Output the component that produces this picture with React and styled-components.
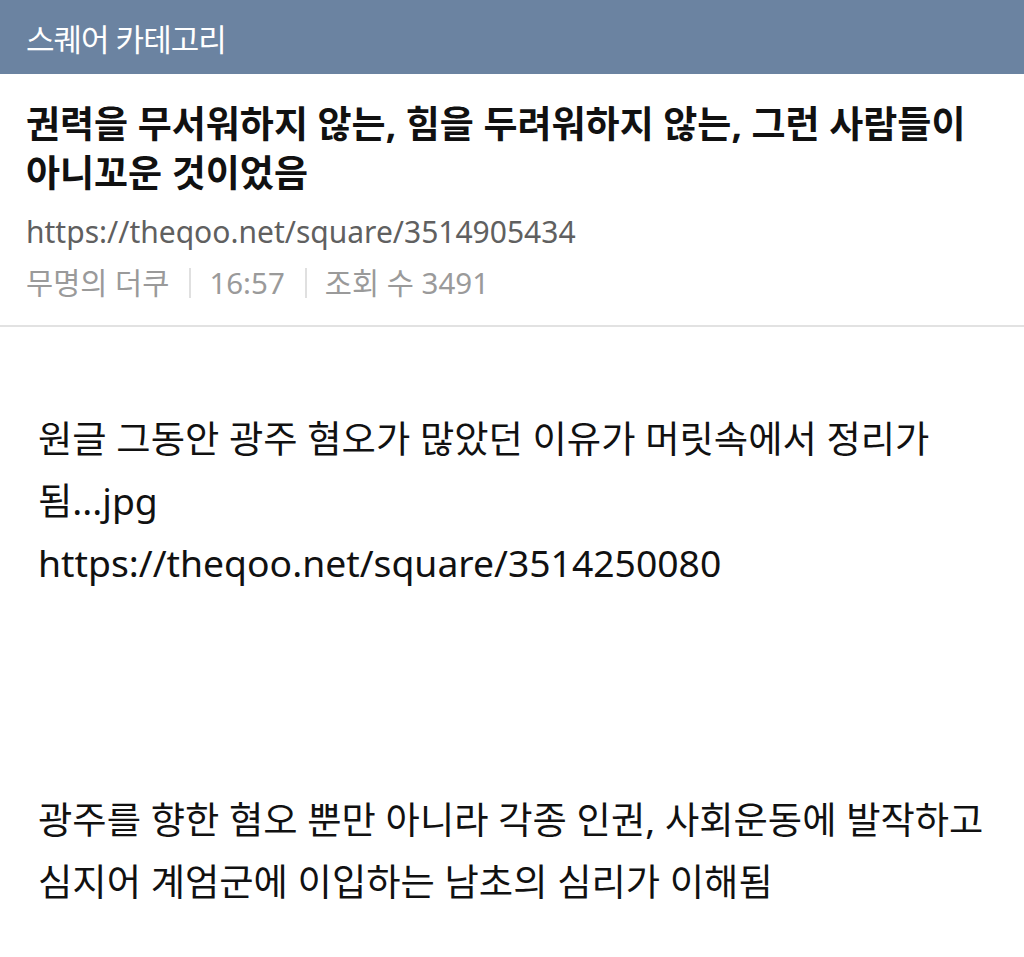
import React from "react";
import styled, { createGlobalStyle } from "styled-components";

const GlobalStyle = createGlobalStyle`
  html, body {
    margin: 0;
    padding: 0;
    background: #fff;
  }
  body {
    font-family: "Noto Sans", "Noto Sans CJK KR", sans-serif;
  }
`;

const Page = styled.div`
  width: 1024px;
  min-height: 957px;
  background: #fff;
`;

const TopBar = styled.header`
  height: 74px;
  background: #6b83a1;
  display: flex;
  align-items: center;
  padding: 0 26px;
  box-sizing: border-box;
  color: #fff;
  font-size: 31px;
  letter-spacing: -1px;
`;

const Head = styled.section`
  padding: 25px 26px 22px;
  border-bottom: 2px solid #e2e2e2;
`;

const Title = styled.h1`
  margin: 0;
  font-size: 37px;
  font-weight: 700;
  line-height: 49px;
  color: #111;
`;

const Link = styled.div`
  margin-top: 15px;
  font-size: 30px;
  line-height: 40px;
  color: #606060;
`;

const Meta = styled.div`
  margin-top: 11px;
  display: flex;
  align-items: center;
  font-size: 29.5px;
  line-height: 40px;
  color: #9a9a9a;
`;

const Sep = styled.span`
  width: 2px;
  height: 30px;
  background: #e0e0e0;
  margin: 0 18px 0 20px;
`;

const Body = styled.article`
  padding: 81px 28px 40px 38px;
  font-size: 37.3px;
  line-height: 62px;
  color: #111;
`;

const Para = styled.p`
  margin: 0;
  & + & {
    margin-top: ${p => p.gap || 0}px;
  }
`;

export default function App() {
  return (
    <Page>
      <GlobalStyle />
      <TopBar>스퀘어 카테고리</TopBar>
      <Head>
        <Title>권력을 무서워하지 않는, 힘을 두려워하지 않는, 그런 사람들이 아니꼬운 것이었음</Title>
        <Link>https://theqoo.net/square/3514905434</Link>
        <Meta>
          <span>무명의 더쿠</span>
          <Sep />
          <span>16:57</span>
          <Sep />
          <span>조회 수 3491</span>
        </Meta>
      </Head>
      <Body>
        <Para>
          원글 그동안 광주 혐오가 많았던 이유가 머릿속에서 정리가 됨...jpg
          <br />
          https://theqoo.net/square/3514250080
        </Para>
        <Para gap={195}>
          광주를 향한 혐오 뿐만 아니라 각종 인권, 사회운동에 발작하고 심지어 계엄군에 이입하는 남초의 심리가 이해됨
        </Para>
      </Body>
    </Page>
  );
}
